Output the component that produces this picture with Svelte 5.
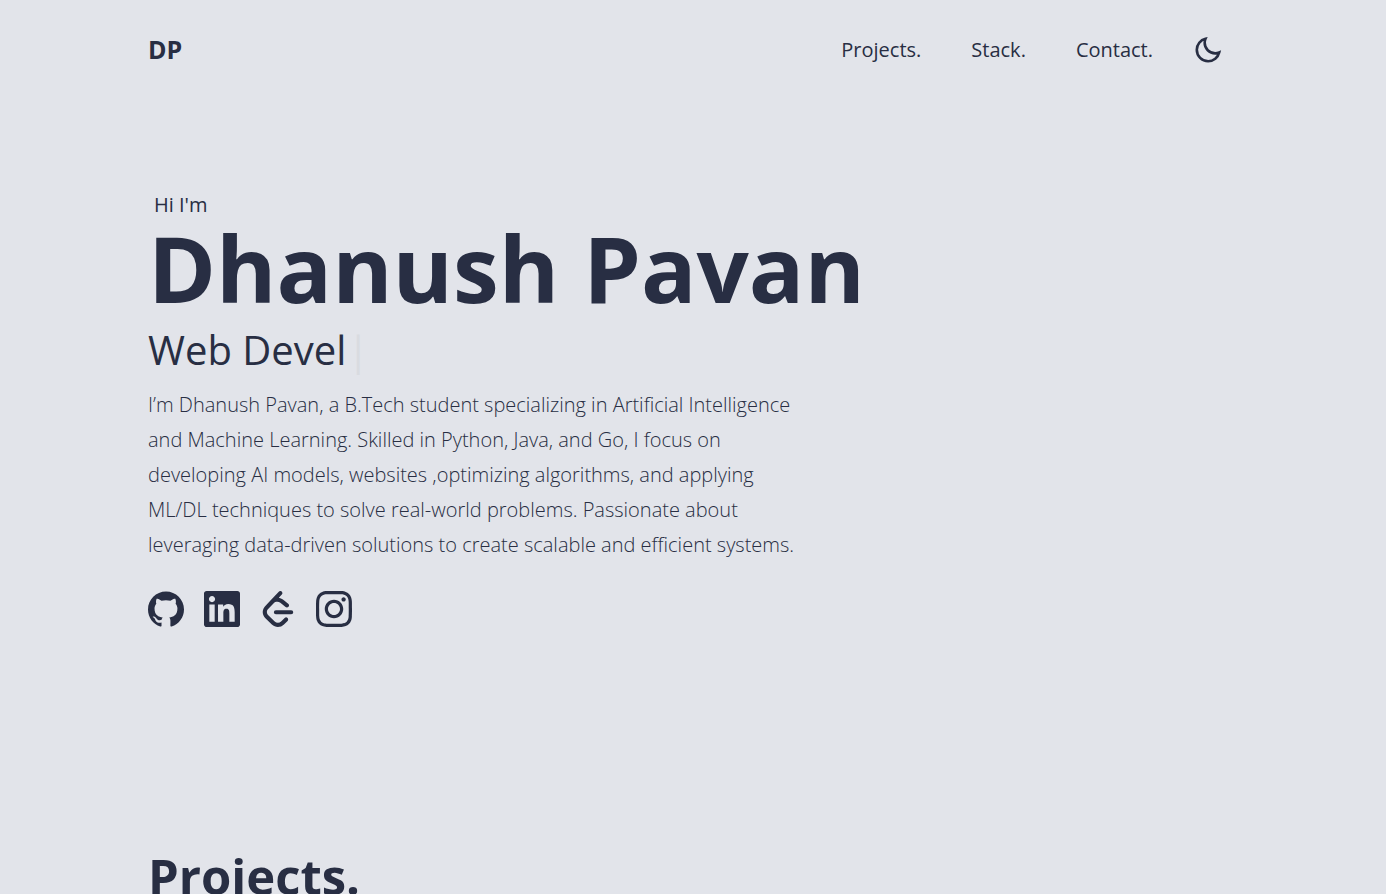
<script>
  const links = ['Projects', 'Stack', 'Contact'];
  const socials = [
    { name: 'GitHub', d: 'M12 .297c-6.63 0-12 5.373-12 12 0 5.303 3.438 9.8 8.205 11.385.6.113.82-.258.82-.577 0-.285-.01-1.04-.015-2.04-3.338.724-4.042-1.61-4.042-1.61C4.422 18.07 3.633 17.7 3.633 17.7c-1.087-.744.084-.729.084-.729 1.205.084 1.838 1.236 1.838 1.236 1.07 1.835 2.809 1.305 3.495.998.108-.776.417-1.305.76-1.605-2.665-.3-5.466-1.332-5.466-5.93 0-1.31.465-2.38 1.235-3.22-.135-.303-.54-1.523.105-3.176 0 0 1.005-.322 3.3 1.23.96-.267 1.98-.399 3-.405 1.02.006 2.04.138 3 .405 2.28-1.552 3.285-1.23 3.285-1.23.645 1.653.24 2.873.12 3.176.765.84 1.23 1.91 1.23 3.22 0 4.61-2.805 5.625-5.475 5.92.42.36.81 1.096.81 2.22 0 1.606-.015 2.896-.015 3.286 0 .315.21.69.825.57C20.565 22.092 24 17.592 24 12.297c0-6.627-5.373-12-12-12' },
    { name: 'LinkedIn', d: 'M20.447 20.452h-3.554v-5.569c0-1.328-.027-3.037-1.852-3.037-1.853 0-2.136 1.445-2.136 2.939v5.667H9.351V9h3.414v1.561h.046c.477-.9 1.637-1.85 3.37-1.85 3.601 0 4.267 2.37 4.267 5.455v6.286zM5.337 7.433c-1.144 0-2.063-.926-2.063-2.065 0-1.138.92-2.063 2.063-2.063 1.14 0 2.064.925 2.064 2.063 0 1.139-.925 2.065-2.064 2.065zm1.782 13.019H3.555V9h3.564v11.452zM22.225 0H1.771C.792 0 0 .774 0 1.729v20.542C0 23.227.792 24 1.771 24h20.451C23.2 24 24 23.227 24 22.271V1.729C24 .774 23.2 0 22.222 0h.003z' },
    { name: 'LeetCode', d: 'M13.483 0a1.374 1.374 0 0 0-.961.438L7.116 6.226l-3.854 4.126a5.266 5.266 0 0 0-1.209 2.104 5.35 5.35 0 0 0-.125.513 5.527 5.527 0 0 0 .062 2.362 5.83 5.83 0 0 0 .349 1.017 5.938 5.938 0 0 0 1.271 1.818l4.277 4.193.039.038c2.248 2.165 5.852 2.133 8.063-.074l2.396-2.392c.54-.54.54-1.414.003-1.955a1.378 1.378 0 0 0-1.951-.003l-2.396 2.392a3.021 3.021 0 0 1-4.205.038l-.02-.019-4.276-4.193c-.652-.64-.972-1.469-.948-2.263a2.68 2.68 0 0 1 .066-.523 2.545 2.545 0 0 1 .619-1.164L9.13 8.114c1.058-1.134 3.204-1.27 4.43-.278l3.501 2.831c.593.48 1.461.387 1.94-.207a1.384 1.384 0 0 0-.207-1.943l-3.5-2.831c-.8-.647-1.766-1.045-2.774-1.202l2.015-2.158A1.384 1.384 0 0 0 13.483 0zm-2.866 12.815a1.38 1.38 0 0 0-1.38 1.382 1.38 1.38 0 0 0 1.38 1.382H20.79a1.38 1.38 0 0 0 1.38-1.382 1.38 1.38 0 0 0-1.38-1.382z' },
    { name: 'Instagram', d: 'M12 0C8.74 0 8.333.015 7.053.072 5.775.132 4.905.333 4.14.63c-.789.306-1.459.717-2.126 1.384S.935 3.35.63 4.14C.333 4.905.131 5.775.072 7.053.012 8.333 0 8.74 0 12s.015 3.667.072 4.947c.06 1.277.261 2.148.558 2.913.306.788.717 1.459 1.384 2.126.667.666 1.336 1.079 2.126 1.384.766.296 1.636.499 2.913.558C8.333 23.988 8.74 24 12 24s3.667-.015 4.947-.072c1.277-.06 2.148-.262 2.913-.558.788-.306 1.459-.718 2.126-1.384.666-.667 1.079-1.335 1.384-2.126.296-.765.499-1.636.558-2.913.06-1.28.072-1.687.072-4.947s-.015-3.667-.072-4.947c-.06-1.277-.262-2.149-.558-2.913-.306-.789-.718-1.459-1.384-2.126C21.319 1.347 20.651.935 19.86.63c-.765-.297-1.636-.499-2.913-.558C15.667.012 15.26 0 12 0zm0 2.16c3.203 0 3.585.016 4.85.071 1.17.055 1.805.249 2.227.415.562.217.96.477 1.382.896.419.42.679.819.896 1.381.164.422.36 1.057.413 2.227.057 1.266.07 1.646.07 4.85s-.015 3.585-.074 4.85c-.061 1.17-.256 1.805-.421 2.227-.224.562-.479.96-.899 1.382-.419.419-.824.679-1.38.896-.42.164-1.065.36-2.235.413-1.274.057-1.649.07-4.859.07-3.211 0-3.586-.015-4.859-.074-1.171-.061-1.816-.256-2.236-.421-.569-.224-.96-.479-1.379-.899-.421-.419-.69-.824-.9-1.38-.165-.42-.359-1.065-.42-2.235-.045-1.26-.061-1.649-.061-4.844 0-3.196.016-3.586.061-4.861.061-1.17.255-1.814.42-2.234.21-.57.479-.96.9-1.381.419-.419.81-.689 1.379-.898.42-.166 1.051-.361 2.221-.421 1.275-.045 1.65-.06 4.859-.06l.045.03zm0 3.678c-3.405 0-6.162 2.76-6.162 6.162 0 3.405 2.76 6.162 6.162 6.162 3.405 0 6.162-2.76 6.162-6.162 0-3.405-2.76-6.162-6.162-6.162zM12 16c-2.21 0-4-1.79-4-4s1.79-4 4-4 4 1.79 4 4-1.79 4-4 4zm7.846-10.405c0 .795-.646 1.44-1.44 1.44-.795 0-1.44-.646-1.44-1.44 0-.794.646-1.439 1.44-1.439.793-.001 1.44.645 1.44 1.439z' }
  ];
</script>

<div class="page">
  <header>
    <a class="brand" href="#top">DP</a>
    <nav>
      {#each links as link}
        <a href={'#' + link.toLowerCase()}>{link}.</a>
      {/each}
      <button aria-label="Switch to dark theme">
        <svg viewBox="0 0 512 512"><path d="M195 125c0-26.3 5.3-51.3 14.9-74.1C118.7 73 51 155.1 51 253c0 114.8 93.2 208 208 208 97.9 0 180-67.7 202.1-158.9-22.8 9.6-47.9 14.9-74.1 14.9-106 0-192-86-192-192z" /></svg>
      </button>
    </nav>
  </header>

  <main id="top">
    <section class="hero">
      <p class="greeting">Hi I'm</p>
      <h1>Dhanush Pavan</h1>
      <p class="role">Web Devel<span class="cursor">|</span></p>
      <p class="bio">I’m Dhanush Pavan, a B.Tech student specializing in Artificial Intelligence and Machine Learning. Skilled in Python, Java, and Go, I focus on developing AI models, websites ,optimizing algorithms, and applying ML/DL techniques to solve real-world problems. Passionate about leveraging data-driven solutions to create scalable and efficient systems.</p>
      <div class="socials">
        {#each socials as social}
          <a href={'#' + social.name.toLowerCase()} aria-label={social.name}>
            <svg viewBox="0 0 24 24"><path d={social.d} /></svg>
          </a>
        {/each}
      </div>
    </section>
    <section id="projects">
      <h2>Projects.</h2>
    </section>
  </main>
</div>

<style>
  :global(body) {
    margin: 0;
    background: #e2e4ea;
    overflow-x: hidden;
  }
  .page {
    box-sizing: border-box;
    max-width: 1090px;
    margin: 0 auto;
    font-family: 'Open Sans', sans-serif;
    font-size: 20px;
    color: #282e43;
  }
  h1, h2, p { margin: 0; }
  a { color: inherit; text-decoration: none; }
  header {
    display: flex;
    align-items: center;
    justify-content: space-between;
    height: 98px;
  }
  .brand { font-size: 25px; font-weight: 700; }
  nav { display: flex; align-items: center; gap: 50px; padding-right: 16px; }
  button {
    display: flex;
    margin-left: -9px;
    padding: 2px 0 0;
    border: 0;
    background: none;
    color: inherit;
  }
  button svg { width: 28px; height: 28px; fill: none; stroke: currentColor; stroke-width: 48; stroke-linejoin: miter; }
  .hero { padding-top: 92px; }
  .greeting { padding-left: 6px; line-height: 30px; }
  h1 { font-size: 92px; line-height: 95px; font-weight: 700; }
  .role { margin-top: 5px; font-size: 40px; line-height: 60px; }
  .cursor { margin-left: 1px; color: #d9dbe0; }
  .bio { max-width: 650px; margin-top: 7px; line-height: 35px; font-weight: 300; }
  .socials { display: flex; gap: 20px; margin-top: 29px; }
  .socials a { display: flex; }
  .socials svg { width: 36px; height: 36px; fill: currentColor; }
  #projects { padding-top: 214px; }
  h2 { font-size: 49px; line-height: 70px; font-weight: 700; }
</style>
